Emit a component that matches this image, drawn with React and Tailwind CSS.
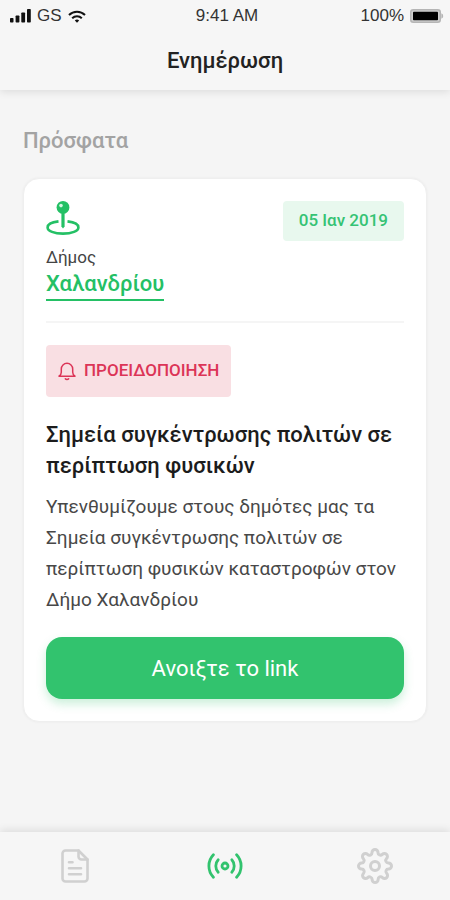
import React from "react";
import { FiSettings } from "react-icons/fi";

const alertData = {
  municipality: "Χαλανδρίου",
  date: "05 Ιαν 2019",
  type: "ΠΡΟΕΙΔΟΠΟΙΗΣΗ",
  title: "Σημεία συγκέντρωσης πολιτών σε περίπτωση φυσικών",
  text: "Υπενθυμίζουμε στους δημότες μας τα Σημεία συγκέντρωσης πολιτών σε περίπτωση φυσικών καταστροφών στον Δήμο Χαλανδρίου",
};

const SignalIcon = () => (
  <svg width="21" height="14" viewBox="0 0 21 14" fill="#111" aria-hidden="true">
    <rect x="0" y="9" width="3.5" height="4.5" rx="0.8" />
    <rect x="5.6" y="6.5" width="3.8" height="7" rx="0.8" />
    <rect x="11.3" y="3.5" width="3.8" height="10" rx="0.8" />
    <rect x="17" y="0" width="3.8" height="13.5" rx="0.8" />
  </svg>
);

const WifiIcon = () => (
  <svg width="18" height="13" viewBox="0 0 18 13" fill="none" stroke="#111" strokeWidth="2" aria-hidden="true">
    <path d="M1 5a11.3 11.3 0 0 1 16 0" />
    <path d="M4.2 8.2a6.8 6.8 0 0 1 9.6 0" />
    <path d="M9 12.8 6.8 10.6a3.1 3.1 0 0 1 4.4 0z" fill="#111" stroke="none" />
  </svg>
);

const BatteryIcon = () => (
  <svg width="34" height="14" viewBox="0 0 34 14" aria-hidden="true">
    <rect x="0.75" y="0.75" width="29.5" height="12.5" rx="2.5" fill="#d0d0d0" stroke="#b5b5b5" strokeWidth="1.5" />
    <rect x="3" y="2.8" width="25" height="8.4" rx="0.8" fill="#000" />
    <path d="M31.3 4.2a3 3 0 0 1 0 5.6z" fill="#b5b5b5" />
  </svg>
);

const PinIcon = () => (
  <svg width="34" height="36" viewBox="0 0 34 36" fill="none" stroke="#24c065" aria-hidden="true">
    <path d="M12.5 20.4C6 21.2 1.6 23.4 1.6 26.4c0 3.6 6.6 6.2 15.4 6.2s15.4-2.6 15.4-6.2c0-3-4.4-5.2-10.9-6" strokeWidth="2.6" />
    <path d="M15.4 11h3.2v14.5L17 27.5l-1.6-2z" fill="#24c065" stroke="none" />
    <circle cx="17" cy="6.4" r="6.4" fill="#24c065" stroke="none" />
    <circle cx="15" cy="4.6" r="1.8" fill="#d8f5e4" stroke="none" />
  </svg>
);

const BellIcon = () => (
  <svg width="18" height="19" viewBox="0 0 18 19" fill="none" stroke="#dc3457" strokeWidth="1.5" strokeLinecap="round" strokeLinejoin="round" aria-hidden="true">
    <path d="M1 14.2h16c-1.4-.9-2.3-2-2.3-4V7a5.7 5.7 0 0 0-11.4 0v3.2c0 2-.9 3.1-2.3 4z" />
    <path d="M7.3 16.8c.8 1 2.6 1 3.4 0" />
  </svg>
);

const FileIcon = () => (
  <svg width="28" height="34" viewBox="0 0 28 34" fill="none" stroke="currentColor" strokeWidth="2.6" strokeLinejoin="round" strokeLinecap="round" aria-hidden="true">
    <path d="M17.5 1.5H4.5a3 3 0 0 0-3 3v25a3 3 0 0 0 3 3h19a3 3 0 0 0 3-3V10.5z" />
    <path d="M17.5 1.5v6a3 3 0 0 0 3 3h6" />
    <path d="M8 13.2h3.5M8 19.2h12M8 25.2h12" />
  </svg>
);

const BroadcastIcon = () => (
  <svg width="36" height="26" viewBox="0 0 36 26" fill="none" stroke="currentColor" strokeWidth="2.8" strokeLinecap="round" aria-hidden="true">
    <circle cx="18" cy="13" r="3" />
    <path d="M11.2 6.8a9.2 9.2 0 0 0 0 12.4M24.8 6.8a9.2 9.2 0 0 1 0 12.4" />
    <path d="M6.4 1.8a16.2 16.2 0 0 0 0 22.4M29.6 1.8a16.2 16.2 0 0 1 0 22.4" />
  </svg>
);

const StatusBar = () => (
  <div className="grid grid-cols-3 items-center h-8 pl-2.5 pr-1.5 font-['Liberation_Sans',sans-serif] text-[17px] text-[#333]">
    <div className="flex items-center gap-1.5">
      <SignalIcon />
      <span>GS</span>
      <WifiIcon />
    </div>
    <span className="text-center">9:41 AM</span>
    <div className="flex items-center justify-end gap-1.5">
      <span>100%</span>
      <BatteryIcon />
    </div>
  </div>
);

const AlertCard = ({ alert }) => (
  <article className="rounded-2xl border border-[#efefef] bg-white px-5.5 pt-5.5 pb-5.5 shadow-[0_0_3px_rgba(0,0,0,0.05)]">
    <div className="flex items-start justify-between">
      <div className="flex flex-col items-start">
        <PinIcon />
        <span className="mt-2 text-[17px] leading-6 text-[#444]">Δήμος</span>
        <a
          href="#municipality"
          className="border-b-2 border-[#24c065] text-[22px] leading-[30px] font-medium text-[#24c065]"
        >
          {alert.municipality}
        </a>
      </div>
      <time
        dateTime="2019-01-05"
        className="flex h-10 items-center rounded bg-[#e8f8ee] px-4 text-[17px] font-medium text-[#35c374]"
      >
        {alert.date}
      </time>
    </div>

    <hr className="mt-5 border-t-2 border-[#f5f5f5]" />

    <div className="mt-5.5 inline-flex h-13 items-center gap-2 rounded bg-[#f9dfe3] px-3 text-[17px] font-medium text-[#dc3457]">
      <BellIcon />
      <span>{alert.type}</span>
    </div>

    <h3 className="mt-5.5 text-[22px] leading-[31px] font-medium text-[#1c1c1c]">
      {alert.title}
    </h3>
    <p className="mt-2.5 text-[19px] leading-[31px] text-[#484848]">
      {alert.text}
    </p>

    <button
      type="button"
      className="mt-5.5 h-15.5 w-full rounded-2xl bg-[#32c36e] text-[22px] text-white shadow-[0_5px_10px_rgba(50,195,110,0.25)]"
    >
      Ανοιξτε το link
    </button>
  </article>
);

const App = () => {
  return (
    <div className="flex min-h-screen flex-col bg-[#f5f5f5] font-[Roboto,sans-serif]">
      <header className="bg-[#f6f6f6] shadow-[0_2px_8px_rgba(0,0,0,0.1)]">
        <StatusBar />
        <h1 className="pt-3.5 pb-3.5 text-center text-[22px] leading-[30px] font-medium text-[#222]">
          Ενημέρωση
        </h1>
      </header>

      <main className="flex-1 px-[23px] pt-9">
        <h2 className="mb-5.5 text-[22px] leading-[30px] font-medium text-[#a3a3a3]">
          Πρόσφατα
        </h2>
        <AlertCard alert={alertData} />
      </main>

      <nav className="grid h-17 grid-cols-3 bg-[#f6f6f6] text-[#d0d0d0] shadow-[0_-2px_8px_rgba(0,0,0,0.1)]">
        <button type="button" aria-label="Έγγραφα" className="flex items-center justify-center">
          <FileIcon />
        </button>
        <button type="button" aria-label="Ενημέρωση" className="flex items-center justify-center text-[#32c36e]">
          <BroadcastIcon />
        </button>
        <button type="button" aria-label="Ρυθμίσεις" className="flex items-center justify-center">
          <FiSettings size={36} />
        </button>
      </nav>
    </div>
  );
};

export default App;
